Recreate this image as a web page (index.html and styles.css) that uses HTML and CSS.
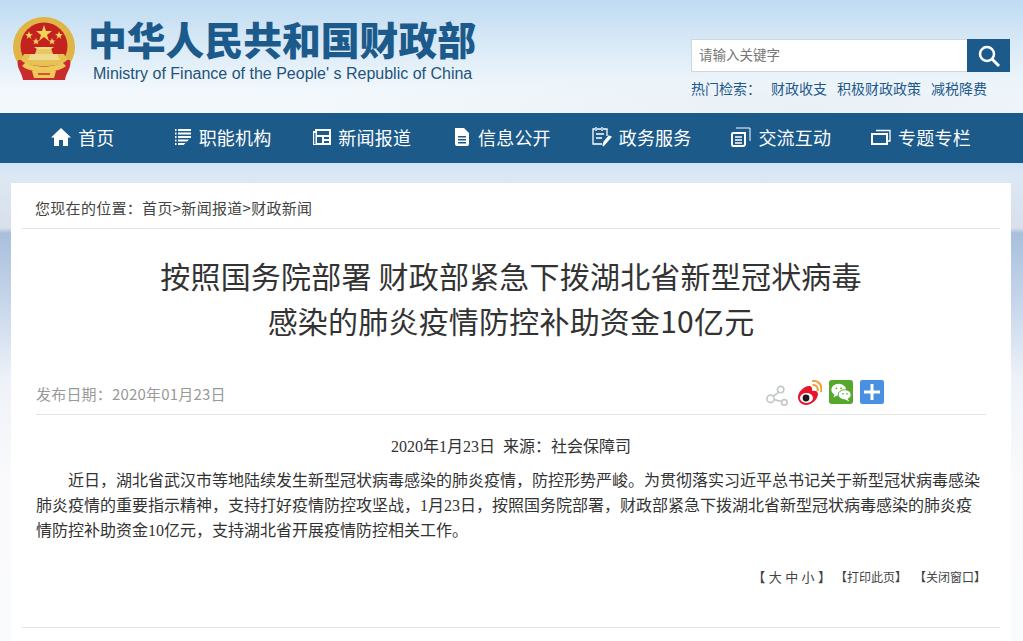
FILE: index.html
```html
<!DOCTYPE html>
<html lang="zh-CN">
<head>
    <meta charset="UTF-8">
    <title>按照国务院部署 财政部紧急下拨湖北省新型冠状病毒感染的肺炎疫情防控补助资金10亿元</title>
    <link rel="stylesheet" href="styles.css">
</head>
<body>
    <header class="top">
        <div class="logo">
            <svg class="emblem" viewBox="0 0 64 66" width="64" height="66">
                <ellipse cx="32" cy="31" rx="31" ry="30" fill="#e0b445"/>
                <path d="M6 44 C4 52 10 56 11 64 H53 C54 56 60 52 58 44 Z" fill="#c92c2c"/>
                <circle cx="32" cy="30" r="23.500" fill="#c4221f"/>
                <path d="M9 44 C16 52 48 52 55 44 L52 38 H12 Z" fill="#e6c254"/>
                <path d="M19 38 H45 L48 44 H16 Z" fill="#f0d98c"/>
                <path d="M25 32 H39 L41 38 H23 Z" fill="#e8c860"/>
                <path d="M22 31 H42 L39 33 H25 Z" fill="#f0d98c"/>
                <path d="M32 9 l2 6 h6 l-5 4 2 6 -5 -4 -5 4 2 -6 -5 -4 h6 Z" fill="#f4d35a"/>
                <path d="M17 15 l1 3 h3 l-2.500 2 1 3 -2.500 -2 -2.500 2 1 -3 -2.500 -2 h3 Z" fill="#f4d35a"/>
                <path d="M47 15 l1 3 h3 l-2.500 2 1 3 -2.500 -2 -2.500 2 1 -3 -2.500 -2 h3 Z" fill="#f4d35a"/>
                <path d="M24 22 l1 2.500 h2.500 l-2 1.500 1 2.500 -2.500 -1.500 -2.500 1.500 1 -2.500 -2 -1.500 h2.500 Z" fill="#f4d35a"/>
                <path d="M40 22 l1 2.500 h2.500 l-2 1.500 1 2.500 -2.500 -1.500 -2.500 1.500 1 -2.500 -2 -1.500 h2.500 Z" fill="#f4d35a"/>
                <path d="M10 50 C20 58 44 58 54 50 L50 46 C42 52 22 52 14 46 Z" fill="#edc95a"/>
                <path d="M20 55 H44 L42 62 H22 Z" fill="#edc95a"/>
                <path d="M26 58 H38" stroke="#c92c2c" stroke-width="1.500"/>
            </svg>
            <div class="logo-text">
                <div class="logo-cn">中华人民共和国财政部</div>
                <div class="logo-en">Ministry of Finance of the People' s Republic of China</div>
            </div>
        </div>
        <div class="search-box">
            <div class="search">
                <div class="search-input">请输入关键字</div>
                <div class="search-btn">
                    <svg viewBox="0 0 24 24" width="24" height="24" fill="none" stroke="#fff">
                        <circle cx="10" cy="10" r="7" stroke-width="2.500"/>
                        <path d="M15 15 L22 22" stroke-width="3"/>
                    </svg>
                </div>
            </div>
            <div class="hot">
                <span class="hot-label">热门检索：</span>
                <a>财政收支</a>
                <a>积极财政政策</a>
                <a>减税降费</a>
            </div>
        </div>
    </header>

    <nav class="nav">
        <a class="nav-item">
            <svg viewBox="0 0 20 20" width="20" height="20" fill="#fff"><path d="M10 1 L20 10.500 H17 V19 H12 V13 H8 V19 H3 V10.500 H0 Z"/></svg>
            首页
        </a>
        <a class="nav-item">
            <svg viewBox="0 0 18 18" width="18" height="18" fill="#fff"><path d="M1 1 H2.500 V3 H1 Z M4 1 H17 V3 H4 Z M1 4.500 H2.500 V6.500 H1 Z M4 4.500 H17 V6.500 H4 Z M1 8 H2.500 V10 H1 Z M4 8 H17 V10 H4 Z M1 11.500 H2.500 V13.500 H1 Z M4 11.500 H15 L13 13.500 H4 Z M1 15 H2.500 V17 H1 Z M4 15 H11.500 L9.500 17 H4 Z"/></svg>
            职能机构
        </a>
        <a class="nav-item">
            <svg viewBox="0 0 18 18" width="18" height="18" fill="#fff" fill-rule="evenodd"><path d="M0 3 H2 V1 H18 V17 H0 Z M4 3 V7 H16 V3 Z M4 9 V15 H9 V9 Z M11 9 V11 H16 V9 Z M11 13 V15 H16 V13 Z M1.200 5 V16 H2.500 V5 Z"/></svg>
            新闻报道
        </a>
        <a class="nav-item">
            <svg viewBox="0 0 18 18" width="18" height="18" fill="#fff" fill-rule="evenodd"><path d="M2 0 H11 L16 5 V16 Q16 18 14 18 H4 Q2 18 2 16 Z M5 8 V9.500 H13 V8 Z M5 11 V12.500 H13 V11 Z M5 14 V15.500 H13 V14 Z"/></svg>
            信息公开
        </a>
        <a class="nav-item">
            <svg viewBox="0 0 20 20" width="20" height="20" fill="none" stroke="#fff" stroke-width="1.300"><path d="M10 17 H1 V2 H3 M5 2 H9 M11 2 H15 V9"/><path d="M4 7 H12 M4 11 H10"/><path d="M4 0 V4 M10 0 V4"/><path d="M11 19 L19 10 L17 9 L12 15 Z" fill="#fff"/></svg>
            政务服务
        </a>
        <a class="nav-item">
            <svg viewBox="0 0 20 20" width="20" height="20" fill="none" stroke="#fff" stroke-width="2"><path d="M2 6 H14 V17 Q14 19 12 19 H2 Q1 19 1 17 V7 Q1 6 2 6 Z"/><path d="M5 1 H19 V14" stroke-width="1"/><path d="M4 10 H11 M4 13 H11 M4 16 H11" stroke-width="1.300"/></svg>
            交流互动
        </a>
        <a class="nav-item">
            <svg viewBox="0 0 20 18" width="20" height="18" fill="none" stroke="#fff"><rect x="1" y="6" width="15" height="10" stroke-width="2"/><path d="M5 2.500 H19 V13 H17" stroke-width="1.300"/></svg>
            专题专栏
        </a>
    </nav>

    <main class="card">
        <div class="crumb">您现在的位置：首页&gt;新闻报道&gt;财政新闻</div>
        <h1 class="title">按照国务院部署 财政部紧急下拨湖北省新型冠状病毒<br>感染的肺炎疫情防控补助资金10亿元</h1>
        <div class="meta">
            <span class="date">发布日期：2020年01月23日</span>
            <div class="share">
                <svg class="share-link" viewBox="0 0 24 24" width="22" height="22" fill="none" stroke="#c4c8c8" stroke-width="1.800">
                    <circle cx="16" cy="5" r="3.500"/><circle cx="5" cy="15" r="4"/><circle cx="20" cy="19" r="3"/>
                    <path d="M14 8 L8 12 M9 16 L17 18"/>
                </svg>
                <svg viewBox="0 0 24 25" width="24" height="25">
                    <path d="M0 17 C0 12 6 6 11 6 C14 6 14.500 8.500 14 11 C17 10 20 11 20 14 C20 19 14 25 8 25 C3 25 0 21 0 17 Z" fill="#e6162d"/>
                    <ellipse cx="8.500" cy="18" rx="6.500" ry="5" fill="#fff"/>
                    <circle cx="8" cy="18" r="3.400" fill="#1a1a1a"/>
                    <path d="M14 1 C20 0 25 5 23 12 M14.500 5 C18 4.500 20.500 7 19.500 11" fill="none" stroke="#f0a030" stroke-width="2"/>
                </svg>
                <svg viewBox="0 0 26 26" width="24" height="24">
                    <rect width="26" height="26" rx="3" fill="#55a82b"/>
                    <ellipse cx="10.500" cy="10.500" rx="8" ry="6.500" fill="#fff"/>
                    <path d="M6 15 L5 19 L10 16 Z" fill="#fff"/>
                    <ellipse cx="17" cy="16" rx="7" ry="5.500" fill="#fff" stroke="#55a82b"/>
                    <path d="M20 20 L22 23 L17 21 Z" fill="#fff"/>
                    <circle cx="8" cy="9" r="1" fill="#55a82b"/><circle cx="13" cy="9" r="1" fill="#55a82b"/>
                    <circle cx="15" cy="15" r="0.900" fill="#55a82b"/><circle cx="19.500" cy="15" r="0.900" fill="#55a82b"/>
                </svg>
                <svg viewBox="0 0 24 24" width="24" height="24">
                    <rect width="24" height="24" rx="2" fill="#4a90e2"/>
                    <path d="M10.500 4 H13.500 V10.500 H20 V13.500 H13.500 V20 H10.500 V13.500 H4 V10.500 H10.500 Z" fill="#fff"/>
                </svg>
            </div>
        </div>
        <div class="article">
            <p class="source">2020年1月23日&nbsp;&nbsp;来源：社会保障司</p>
            <p class="para">近日，湖北省武汉市等地陆续发生新型冠状病毒感染的肺炎疫情，防控形势严峻。为贯彻落实习近平总书记关于新型冠状病毒感染肺炎疫情的重要指示精神，支持打好疫情防控攻坚战，1月23日，按照国务院部署，财政部紧急下拨湖北省新型冠状病毒感染的肺炎疫情防控补助资金10亿元，支持湖北省开展疫情防控相关工作。</p>
        </div>
        <div class="tools">
            <span class="sizes">【 大 中 小 】</span>
            <a>【打印此页】</a>
            <a>【关闭窗口】</a>
        </div>
        <div class="foot-line"></div>
    </main>
</body>
</html>
```

FILE: styles.css
```css
* {
    box-sizing: border-box;
}
html, body {
    height: 100%;
}
body {
    margin: 0;
    overflow: hidden;
    color: #333;
    font-family: "Liberation Sans", "Noto Sans CJK SC", sans-serif;
    background-color: #fafbfc;
    background-image:
        radial-gradient(ellipse 500px 40px at 800px 105px, #e9f0f6 0%, rgba(233, 240, 246, 0) 100%),
        linear-gradient(180deg, #bfdbf2 0, #d6e8f6 40px, #f2f8fc 90px, #f4f8fb 113px, #cfe4f6 163px, #dce8f4 175px, #d8e0ea 228px, #a8c0dc 233px, #c5d5ea 300px, #eef2f8 380px, #fafafc 480px, #fafbfc 641px);
}
.top {
    height: 113px;
    padding: 16px 13px 0 12px;
    display: flex;
    justify-content: space-between;
}
.logo {
    display: flex;
    gap: 12px;
}
.emblem {
    flex: none;
}
.logo-cn {
    font-family: "Noto Sans CJK SC", sans-serif;
    font-weight: 900;
    font-size: 38.800px;
    line-height: 44px;
    color: #1c5a8c;
    white-space: nowrap;
}
.logo-en {
    margin: 5px 0 0 5px;
    font-size: 16px;
    line-height: 18px;
    color: #23527c;
    white-space: nowrap;
}
.search-box {
    width: 319px;
    padding-top: 23px;
}
.search {
    display: flex;
    height: 33px;
}
.search-input {
    flex: 1;
    padding-left: 7px;
    font-family: "Noto Sans CJK SC", sans-serif;
    font-size: 13.500px;
    line-height: 29px;
    color: #777;
    background: #fff;
    border: 1px solid #cfd6dc;
    border-right: none;
}
.search-btn {
    width: 43px;
    display: flex;
    align-items: center;
    justify-content: center;
    background: #1c5a8c;
}
.hot {
    display: flex;
    margin-top: 7px;
    font-family: "Noto Sans CJK SC", sans-serif;
    font-size: 14px;
    line-height: 19px;
    color: #1c5a8c;
    white-space: nowrap;
}
.hot-label {
    width: 80px;
}
.hot a {
    margin-right: 10px;
}
.nav {
    height: 50px;
    padding: 0 0 2px 13px;
    display: flex;
    align-items: center;
    background: #1c5a8a;
}
.nav-item {
    width: 139.700px;
    display: flex;
    align-items: center;
    justify-content: center;
    gap: 7px;
    font-family: "Noto Sans CJK SC", sans-serif;
    font-size: 18px;
    letter-spacing: 0.200px;
    color: #fff;
    white-space: nowrap;
}
.card {
    margin: 20px 12px 0 11px;
    padding: 0 11px;
    height: 478px;
    background: #fff;
    font-family: "Noto Sans CJK SC", sans-serif;
}
.crumb {
    height: 46px;
    padding: 15px 0 0 13px;
    font-size: 15px;
    letter-spacing: 0.300px;
    line-height: 20px;
    border-bottom: 1px solid #e4e4e4;
    color: #444;
}
.title {
    margin: 24px 0 0;
    font-size: 30px;
    font-weight: 400;
    letter-spacing: 0.200px;
    line-height: 45px;
    text-align: center;
    color: #333;
}
.meta {
    margin: 32px 14px 0;
    height: 40px;
    padding-right: 102px;
    display: flex;
    justify-content: space-between;
    align-items: flex-start;
    border-bottom: 1px solid #e4e4e4;
}
.date {
    margin-top: 9px;
    font-size: 15px;
    letter-spacing: 0.200px;
    line-height: 20px;
    color: #999;
}
.share {
    display: flex;
    align-items: flex-start;
    gap: 7px;
    padding-top: 5px;
}
.share-link {
    margin: 5px 3px 0 0;
}
.article {
    padding: 0 14px;
    font-family: "Liberation Serif", "Noto Sans CJK SC", serif;
    font-size: 16px;
    line-height: 25px;
    color: #333;
}
.article p {
    margin: 0;
}
.source {
    padding-top: 19px;
    text-align: center;
}
.para {
    margin-top: 9px !important;
    text-indent: 2em;
}
.tools {
    margin-top: 25px;
    padding-right: 14px;
    display: flex;
    justify-content: flex-end;
    gap: 7px;
    font-size: 12px;
    line-height: 18px;
    color: #444;
}
.sizes {
    margin-right: -3px;
    font-size: 13px;
    word-spacing: 0.500px;
}
.foot-line {
    margin-top: 41px;
    border-top: 1px solid #e4e4e4;
}
```
